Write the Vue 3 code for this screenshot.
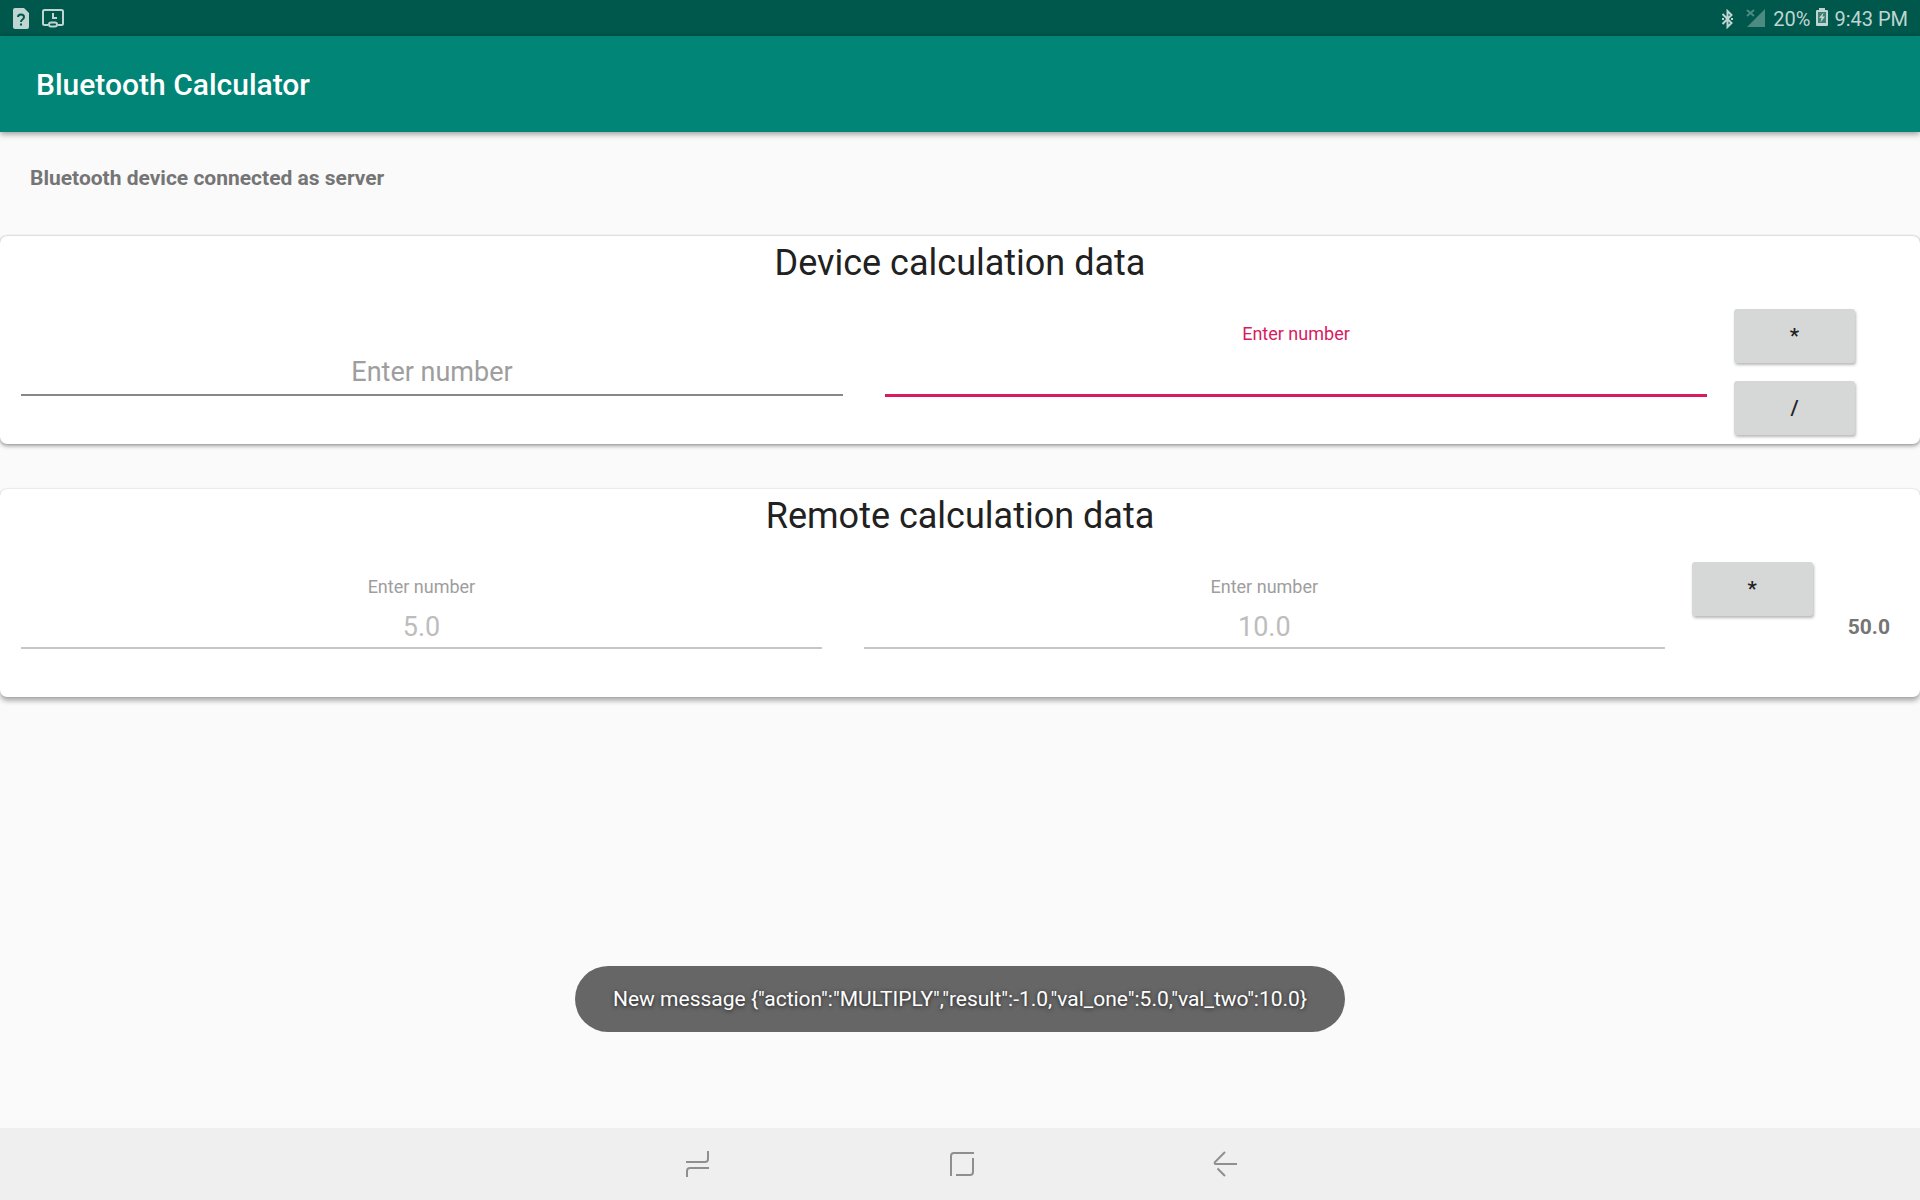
<script setup>
import { ref } from 'vue'

const deviceOne = ref('')
const deviceTwo = ref('')
const remoteOne = ref('5.0')
const remoteTwo = ref('10.0')
const result = ref('50.0')
const toast = ref('New message {"action":"MULTIPLY","result":-1.0,"val_one":5.0,"val_two":10.0}')
</script>

<template>
  <div class="screen">
    <div class="status-bar">
      <div class="status-group left">
        <svg class="sim-icon" width="16" height="21" viewBox="0 0 16 21" aria-hidden="true">
          <path class="fill" fill-rule="evenodd" d="M2 0H11L16 5V19Q16 21 14 21H2Q0 21 0 19V2Q0 0 2 0Z" />
          <path d="M5 9Q5 6.500 8 6.500T11 9Q11 10.500 9.500 11.500T8 14" fill="none" stroke="#00574b" stroke-width="2" />
          <rect x="7" y="15.500" width="2" height="2" fill="#00574b" />
        </svg>
        <svg width="22" height="19" viewBox="0 0 22 19" aria-hidden="true">
          <path class="line" d="M6 16H2.500Q1 16 1 14.500V2.500Q1 1 2.500 1H19.500Q21 1 21 2.500V14.500Q21 16 19.500 16H16" stroke-width="2" />
          <path class="line" d="M11 4V9H15" stroke-width="2" />
          <rect class="line" x="7" y="13.500" width="8" height="4" rx="2" stroke-width="2" />
        </svg>
      </div>
      <div class="status-group right">
        <svg class="bluetooth" width="13" height="20" viewBox="0 0 13 20" aria-hidden="true">
          <path class="line" d="M1.500 5L10.500 14L6.500 18V2L10.500 6L1.500 15" stroke-width="2" />
          <path class="fill" d="M10 9H12V11H10ZM1 9H3V11H1Z" />
        </svg>
        <svg class="signal" width="20" height="19" viewBox="0 0 20 19" aria-hidden="true">
          <path class="dim-fill" d="M19 0V18H1Z" />
          <path class="dim-line" d="M1 1L8 7M8 1L1 7" stroke-width="2" />
        </svg>
        <span>20%</span>
        <svg class="battery" width="12" height="22" viewBox="0 0 12 22" aria-hidden="true">
          <path class="fill" d="M3 0H9V2H11Q12 2 12 3V17Q12 18 11 18H1Q0 18 0 17V3Q0 2 1 2H3Z" />
          <path d="M2 4H10V15H2Z" fill="#3f8076" />
          <path class="fill" d="M7.500 4.500L3 10H5.500L4.500 14.500L9 8.500H6.500Z" />
        </svg>
        <span>9:43 PM</span>
      </div>
    </div>

    <header class="app-bar">
      <h1>Bluetooth Calculator</h1>
    </header>

    <main>
      <p class="connection">Bluetooth device connected as server</p>

      <section class="card">
        <h2>Device calculation data</h2>
        <div class="row">
          <div class="field resting">
            <label for="device-one">Enter number</label>
            <input id="device-one" v-model="deviceOne" type="text" inputmode="decimal" />
          </div>
          <div class="field active">
            <label for="device-two">Enter number</label>
            <input id="device-two" v-model="deviceTwo" type="text" inputmode="decimal" />
          </div>
          <div class="actions">
            <button type="button" class="op">*</button>
            <button type="button" class="op">/</button>
          </div>
          <output class="result"></output>
        </div>
      </section>

      <section class="card raised">
        <h2>Remote calculation data</h2>
        <div class="row">
          <div class="field">
            <label for="remote-one">Enter number</label>
            <input id="remote-one" v-model="remoteOne" type="text" disabled />
          </div>
          <div class="field">
            <label for="remote-two">Enter number</label>
            <input id="remote-two" v-model="remoteTwo" type="text" disabled />
          </div>
          <div class="actions">
            <button type="button" class="op">*</button>
          </div>
          <output class="result">{{ result }}</output>
        </div>
      </section>

      <div class="toast" role="status">{{ toast }}</div>
    </main>

    <nav class="nav-bar">
      <button type="button" aria-label="Recent apps">
        <svg width="28" height="28" viewBox="0 0 28 28">
          <path d="M4 12H23Q26 12 26 9V1M27 18H8Q5 18 5 21V27" />
        </svg>
      </button>
      <button type="button" aria-label="Home">
        <svg width="28" height="28" viewBox="0 0 28 28">
          <path d="M5 26V6Q5 3 8 3H28M27 8V22Q27 25 24 25H10" />
        </svg>
      </button>
      <button type="button" aria-label="Back">
        <svg width="28" height="28" viewBox="0 0 28 28">
          <path d="M27 14H6Q4 14 5 12L15 2M7.500 18.500L15 26" />
        </svg>
      </button>
    </nav>
  </div>
</template>

<style>
body {
  background: #fafafa;
}
</style>

<style scoped>
.screen {
  display: flex;
  flex-direction: column;
  min-height: 100vh;
  font-family: Roboto, "Noto Sans", sans-serif;
  color: #212121;
}

h1,
h2,
p {
  margin: 0;
}

.status-bar {
  display: flex;
  justify-content: space-between;
  align-items: center;
  box-sizing: border-box;
  height: 36px;
  padding: 1px 12px 0 13px;
  background: #00574b;
  color: #bfd5d2;
  font-size: 20px;
}

.status-group {
  display: flex;
  align-items: center;
}

.left {
  gap: 13px;
}

.bluetooth {
  margin-right: 12px;
}

.signal {
  margin-right: 7px;
}

.battery {
  margin: 0 6px;
}

.fill {
  fill: #bfd5d2;
}

.line {
  fill: none;
  stroke: #bfd5d2;
}

.dim-fill {
  fill: #4d8a81;
}

.dim-line {
  stroke: #4d8a81;
}

.app-bar {
  display: flex;
  align-items: center;
  height: 96px;
  padding: 0 36px;
  background: #008577;
  box-shadow: 0 2px 6px rgba(0, 0, 0, 0.4);
}

h1 {
  color: #fff;
  font-size: 30px;
  font-weight: 500;
}

main {
  position: relative;
  flex: 1;
}

.connection {
  padding: 34px 30px 46px;
  color: #757575;
  font-size: 21px;
  font-weight: 700;
  line-height: 24px;
}

.card {
  margin-bottom: 45px;
  border-radius: 7px;
  background: #fff;
  box-shadow: 0 2px 4px rgba(0, 0, 0, 0.36), 0 0 2px rgba(0, 0, 0, 0.24);
}

.raised {
  box-shadow: 0 4px 5px rgba(0, 0, 0, 0.3), 0 0 2px rgba(0, 0, 0, 0.2);
}

h2 {
  margin-bottom: 10px;
  font-size: 36px;
  font-weight: 400;
  line-height: 54px;
  text-align: center;
}

.row {
  display: flex;
  min-height: 144px;
}

.field {
  display: grid;
  flex: 1 1 0;
  grid-template-rows: 24px auto;
  align-content: start;
  min-width: 0;
  margin: 0 15px;
  padding: 22px 6px 0;
}

.field label {
  grid-column: 1;
  grid-row: 1;
  color: #9e9e9e;
  font-size: 18px;
  line-height: 24px;
  text-align: center;
}

.field input {
  grid-column: 1;
  grid-row: 2;
  box-sizing: border-box;
  width: 100%;
  height: 50px;
  padding: 8px 0 0;
  border: 0;
  border-bottom: 2px solid #c6c6c6;
  border-radius: 0;
  outline: 0;
  background: transparent;
  color: #bdbdbd;
  font: 27px Roboto, "Noto Sans", sans-serif;
  text-align: center;
}

.field.resting label {
  grid-row: 2;
  padding-top: 4px;
  font-size: 27px;
  line-height: 44px;
}

.field.resting input {
  border-bottom-color: #888;
  color: #212121;
}

.field.active label {
  color: #d81b60;
}

.field.active input {
  height: 51px;
  border-bottom: 3px solid #d81b60;
  color: #212121;
}

.actions {
  display: flex;
  flex-direction: column;
  gap: 18px;
  padding: 9px 6px;
}

.op {
  width: 121px;
  height: 54px;
  margin-right: -1px;
  padding: 0;
  border: 0;
  border-radius: 3px;
  background: #d6d7d7;
  box-shadow: 1px 2px 3px rgba(0, 0, 0, 0.28);
  color: #212121;
  font: 500 21px Roboto, "Noto Sans", sans-serif;
}

.result {
  align-self: center;
  padding: 4px 30px 0;
  color: #757575;
  font-size: 21px;
  font-weight: 700;
  line-height: 24px;
}

.toast {
  position: absolute;
  bottom: 96px;
  left: 50%;
  padding: 0 38px;
  border-radius: 33px;
  background: #666;
  color: #fff;
  font-size: 21px;
  line-height: 66px;
  text-shadow: 0 1px 4px rgba(0, 0, 0, 0.7);
  white-space: nowrap;
  transform: translateX(-50%);
}

.nav-bar {
  display: flex;
  justify-content: center;
  height: 72px;
  background: #efefef;
}

.nav-bar button {
  display: flex;
  align-items: center;
  justify-content: center;
  width: 264px;
  padding: 0;
  border: 0;
  background: transparent;
}

.nav-bar path {
  fill: none;
  stroke: #8f8f8f;
  stroke-width: 2;
}
</style>
